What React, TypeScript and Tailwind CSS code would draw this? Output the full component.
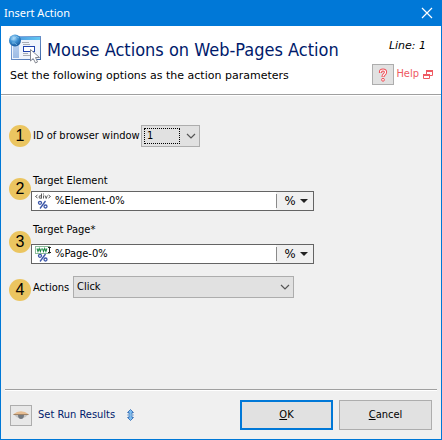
import React from "react"
import type { ReactNode } from "react"

const UI_FONT = "font-['DejaVu_Sans_Condensed','DejaVu_Sans',sans-serif]"

const PageIcon = () => (
  <svg className="w-8 h-8 shrink-0" viewBox="0 0 32 32" aria-hidden="true">
    <defs>
      <linearGradient id="winFrame" x1="0" y1="0" x2="1" y2="1">
        <stop offset="0" stopColor="#8fb4e6" />
        <stop offset="1" stopColor="#3f68a8" />
      </linearGradient>
      <linearGradient id="winBar" x1="0" y1="0" x2="1" y2="0">
        <stop offset="0" stopColor="#4a8fd8" />
        <stop offset="1" stopColor="#62c8f4" />
      </linearGradient>
      <linearGradient id="side" x1="0" y1="0" x2="0" y2="1">
        <stop offset="0" stopColor="#bcd4f2" />
        <stop offset="1" stopColor="#9dbbe4" />
      </linearGradient>
      <radialGradient id="globe" cx="0.4" cy="0.3" r="0.7">
        <stop offset="0" stopColor="#b5e0fb" />
        <stop offset="0.5" stopColor="#3f93d4" />
        <stop offset="1" stopColor="#175a9e" />
      </radialGradient>
    </defs>
    <rect x="2.500" y="2.500" width="29" height="23" fill="#eef4fc" stroke="url(#winFrame)" />
    <rect x="3" y="3" width="28" height="3" fill="url(#winBar)" />
    <rect x="4" y="7" width="6" height="17" fill="url(#side)" />
    <path d="M13 8.500h7M14 10.500h7M14 19.500h5M14 21.500h7" stroke="#a9adb5" strokeWidth="1" />
    <rect x="14.500" y="12.500" width="11" height="5" fill="#fff" stroke="#1f43ad" />
    <circle cx="6" cy="6.500" r="6" fill="url(#globe)" />
    <path d="M2 5q3 2 4-1t4 0M3 9q3-1 5 2" stroke="#9ed2f4" strokeOpacity=".6" fill="none" />
    <path d="M21.500 15.500v11.500l2.700-2.500 2.300 4.500 2-1-2-4.500h4z" fill="#fff" stroke="#858992" />
  </svg>
)

const Chevron = () => (
  <svg className="absolute right-1 top-1/2 -translate-y-1/2 w-2.5 h-2.5 pointer-events-none" viewBox="0 0 10 10" aria-hidden="true">
    <path d="M1 3l4 4 4-4" fill="none" stroke="#555" strokeWidth="1.200" />
  </svg>
)

const PercentGlyph = () => (
  <g fill="none" stroke="#3c57a8" strokeWidth="1.300">
    <circle cx="5" cy="9.800" r="1.500" />
    <circle cx="10.500" cy="13.500" r="1.500" />
    <path d="M10.500 8L5 15.500" />
  </g>
)

const ElementIcon = () => (
  <svg className="w-4 h-4 shrink-0" viewBox="0 0 16 16" aria-hidden="true">
    <g fill="none" stroke="#4b4b4b" strokeWidth="0.900">
      <path d="M2.500 2L.5 3.500l2 1.500M13.500 2l2 1.500-2 1.500" />
      <path d="M6.500.5v5M6.500 3q-2.500-1-2.500 1t2.500 1M8.500 2.500v3M8.500.5v1M10 2.500l1.200 3 1.200-3" />
    </g>
    <PercentGlyph />
  </svg>
)

const BrowserIcon = () => (
  <svg className="w-4 h-4 shrink-0" viewBox="0 0 16 16" aria-hidden="true">
    <rect x=".5" y=".5" width="14" height="7" fill="#fff" stroke="#8dbb9b" />
    <path d="M2 2.500l1 3 1.200-3 1.200 3 1-3M7.500 2.500l1 3 1.200-3 1.200 3 1-3" fill="none" stroke="#1d8a45" strokeWidth="1.100" />
    <path d="M13 1.500h3M14.500 1.500v5M13 6.500h3" stroke="#222" strokeWidth="1" />
    <PercentGlyph />
  </svg>
)

const Badge = ({ n, className = "" }: { n: number; className?: string }) => (
  <span
    className={`flex items-center justify-center w-[22px] h-[22px] shrink-0 rounded-full bg-[#ebc560] text-base font-['Liberation_Sans',sans-serif] text-black ${className}`}
  >
    {n}
  </span>
)

interface VariableInputProps {
  id: string
  label: string
  value: string
  icon: ReactNode
  labelClass: string
}

const VariableInput = ({ id, label, value, icon, labelClass }: VariableInputProps) => (
  <div className="w-[283px] max-w-full">
    <label htmlFor={id} className={`block h-4 pl-0.5 leading-4 ${labelClass}`}>
      {label}
    </label>
    <div className="flex items-center h-5 pl-[3px] border border-[#646464] bg-white">
      {icon}
      <input id={id} defaultValue={value} className="flex-1 min-w-0 h-4 pl-1 bg-transparent outline-none" />
      <div className="flex items-center h-full bg-[#f0f0f0]">
        <span className="w-px h-3.5 bg-[#8a8a8a]" />
        <button
          type="button"
          aria-label={`Insert variable in ${label}`}
          className="flex items-center justify-center gap-1 w-9 h-full pl-0.5 text-[13px]"
        >
          %
          <svg className="w-2 h-1" viewBox="0 0 8 4" aria-hidden="true">
            <path d="M0 0h8L4 4z" fill="#222" />
          </svg>
        </button>
      </div>
    </div>
  </div>
)

export default function App() {
  return (
    <div className={`flex flex-col min-h-screen bg-[#f0f0f0] border border-t-0 border-[#0078d7] text-[11px] text-black ${UI_FONT}`}>
      <div className="flex items-center justify-between h-[26px] pl-[3px] pr-2 bg-[#0078d7] text-white">
        <span className="font-['Noto_Sans',sans-serif]">Insert Action</span>
        <button type="button" aria-label="Close">
          <svg className="w-3 h-3" viewBox="0 0 12 12" aria-hidden="true">
            <path d="M1 1l10 10M11 1L1 11" stroke="#fff" strokeWidth="1.200" />
          </svg>
        </button>
      </div>

      <header className="flex justify-between h-[69px] pl-2 pr-2 pt-1.5 bg-white border-b border-[#a0a0a0] font-['DejaVu_Sans',sans-serif]">
        <div className="whitespace-nowrap">
          <div className="flex items-center gap-1.5 h-9">
            <PageIcon />
            <h1 className={`text-lg text-[#001a6b] ${UI_FONT}`}>Mouse Actions on Web-Pages Action</h1>
          </div>
          <p className="pl-px leading-4">Set the following options as the action parameters</p>
        </div>
        <div className="flex flex-col items-end">
          <em className="pr-[7px] pt-1.5 leading-4">Line: 1</em>
          <div className={`flex items-center mt-2.5 text-[#ee5a62] ${UI_FONT}`}>
            <button type="button" aria-label="Context help" className="flex items-center justify-center w-[22px] h-[21px] bg-[#e1e1e1] border border-[#adadad]">
              <svg className="w-3.5 h-3.5" viewBox="0 0 14 14" aria-hidden="true">
                <path d="M4.500 5V4Q4.500 2 7 2t2.500 2Q9.500 5.500 8.200 6.500 7 7.400 7 9" fill="none" stroke="#f05058" strokeWidth="3.200" />
                <path d="M4.500 4.600V4Q4.500 2 7 2t2.500 2Q9.500 5.500 8.200 6.500 7 7.400 7 8.600" fill="none" stroke="#fff" strokeWidth="1.200" />
                <circle cx="7" cy="11.800" r="1.400" fill="#fff" stroke="#f05058" />
              </svg>
            </button>
            <a href="#help" className="flex items-center gap-1 pl-0.5">
              Help
              <svg className="w-2.5 h-2.5" viewBox="0 0 10 10" aria-hidden="true">
                <path d="M3.500 4V1M9.500 1v4.500H7" fill="none" stroke="#ee5a62" />
                <path d="M3 1h7" stroke="#ee5a62" strokeWidth="2" />
                <path d="M.5 4.500h6v4h-6z" fill="#fff" stroke="#ee5a62" />
                <path d="M0 5h7" stroke="#ee5a62" strokeWidth="2" />
              </svg>
            </a>
          </div>
        </div>
      </header>

      <main className="flex-1 pl-2 pr-2 pt-[29px] border-t border-white">
        <div className="flex items-center">
          <Badge n={1} />
          <label htmlFor="browser" className="pl-0.5 w-[110px] whitespace-nowrap">
            ID of browser window
          </label>
          <div className="relative w-[59px]">
            <select id="browser" className="block w-full h-[22px] pl-[5px] appearance-none bg-[#e1e1e1] border border-[#adadad] outline-none">
              <option>1</option>
            </select>
            <span className="absolute left-[3px] top-[3px] w-9 h-4 border border-dotted border-black pointer-events-none" />
            <Chevron />
          </div>
        </div>

        <div className="flex items-start mt-[26px]">
          <Badge n={2} className="mt-[5px]" />
          <VariableInput id="element" label="Target Element" value="%Element-0%" icon={<ElementIcon />} labelClass="mb-0.5" />
        </div>

        <div className="flex items-start mt-[11px]">
          <Badge n={3} className="mt-[9px]" />
          <VariableInput id="page" label="Target Page*" value="%Page-0%" icon={<BrowserIcon />} labelClass="mb-1.5" />
        </div>

        <div className="flex items-start mt-3">
          <Badge n={4} className="mt-[3px]" />
          <label htmlFor="actions" className="pl-0.5 pt-1 w-[42px]">
            Actions
          </label>
          <div className="relative w-[221px]">
            <select id="actions" className="block w-full h-[22px] pl-[3px] appearance-none bg-[#e1e1e1] border border-[#adadad] outline-none">
              <option>Click</option>
            </select>
            <Chevron />
          </div>
        </div>
      </main>

      <div className="mx-1 border-t border-b border-t-[#a0a0a0] border-b-white" />
      <footer className="flex items-center pl-[9px] pr-[9px] py-[9px]">
        <button type="button" aria-label="Run results" className="flex items-center justify-center w-[22px] h-[21px] bg-[#e8e8e8] border border-[#adadad]">
          <svg className="w-4 h-3" viewBox="0 0 16 12" aria-hidden="true">
            <path d="M1 5.500q7-4 14 0-2 3.500-7 3.500T1 5.500z" fill="#c4c4c4" />
            <path d="M0 5.500Q8-1 16 5.500z" fill="#e6bd92" />
            <path d="M.5 5.500h15" fill="none" stroke="#a08468" />
            <path d="M5 6h6q0 4-3 4t-3-4z" fill="#74797f" />
          </svg>
        </button>
        <a href="#results" className="flex items-center gap-3 pl-1.5 text-[#001a6b] whitespace-nowrap">
          Set Run Results
          <svg className="w-[7px] h-3" viewBox="0 0 7 12" aria-hidden="true">
            <path d="M3.500.5l3 3H5v5h1.500l-3 3-3-3H2v-5H.5z" fill="#7dbdf0" stroke="#2c66b0" strokeWidth=".8" />
            <path d="M0 6h7" stroke="#8bb4dc" />
          </svg>
        </a>
        <div className="flex gap-1.5 ml-auto">
          <button type="button" className="w-[93px] h-[30px] bg-[#e1e1e1] border-2 border-[#0078d7]">
            <span className="underline">O</span>K
          </button>
          <button type="button" className="w-[93px] h-[30px] bg-[#e1e1e1] border border-[#adadad]">
            <span className="underline">C</span>ancel
          </button>
        </div>
      </footer>
    </div>
  )
}
